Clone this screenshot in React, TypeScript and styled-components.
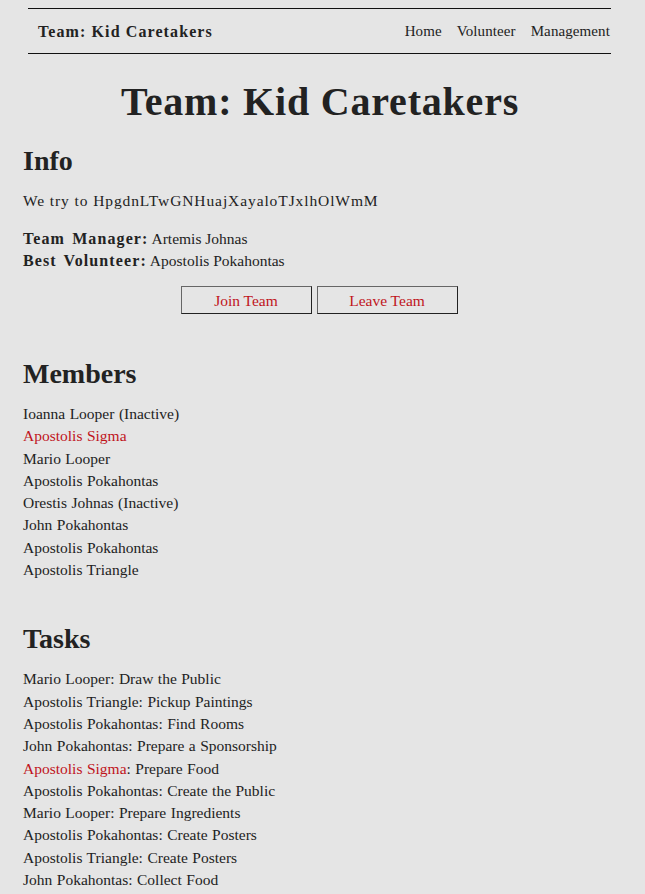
import React from 'react';
import styled, { createGlobalStyle } from 'styled-components';

const GlobalStyle = createGlobalStyle`
    html, body {
        margin: 0;
        padding: 0;
        background: #e5e5e5;
    }
    body {
        font-family: "Liberation Serif", "DejaVu Serif", serif;
        color: #222;
        font-size: 15.5px;
    }
`;

const RED = '#c0141c';

const members: { name: string; inactive?: boolean; me?: boolean }[] = [
    { name: 'Ioanna Looper', inactive: true },
    { name: 'Apostolis Sigma', me: true },
    { name: 'Mario Looper' },
    { name: 'Apostolis Pokahontas' },
    { name: 'Orestis Johnas', inactive: true },
    { name: 'John Pokahontas' },
    { name: 'Apostolis Pokahontas' },
    { name: 'Apostolis Triangle' },
];

const tasks: { who: string; what: string; me?: boolean }[] = [
    { who: 'Mario Looper', what: 'Draw the Public' },
    { who: 'Apostolis Triangle', what: 'Pickup Paintings' },
    { who: 'Apostolis Pokahontas', what: 'Find Rooms' },
    { who: 'John Pokahontas', what: 'Prepare a Sponsorship' },
    { who: 'Apostolis Sigma', what: 'Prepare Food', me: true },
    { who: 'Apostolis Pokahontas', what: 'Create the Public' },
    { who: 'Mario Looper', what: 'Prepare Ingredients' },
    { who: 'Apostolis Pokahontas', what: 'Create Posters' },
    { who: 'Apostolis Triangle', what: 'Create Posters' },
    { who: 'John Pokahontas', what: 'Collect Food' },
];

const App: React.FC = () => {
    return (
        <>
            <GlobalStyle />
            <Nav>
                <Brand>Team: Kid Caretakers</Brand>
                <NavLinks>
                    <NavLink>Home</NavLink>
                    <NavLink>Volunteer</NavLink>
                    <NavLink>Management</NavLink>
                </NavLinks>
            </Nav>
            <Main>
                <Title>Team: Kid Caretakers</Title>

                <SectionTitle>Info</SectionTitle>
                <Paragraph>We try to HpgdnLTwGNHuajXayaloTJxlhOlWmM</Paragraph>
                <Facts>
                    <div><Label>Team Manager:</Label> Artemis Johnas</div>
                    <div><Label>Best Volunteer:</Label> Apostolis Pokahontas</div>
                </Facts>
                <Buttons>
                    <Button $width={131}>Join Team</Button>
                    <Button $width={141}>Leave Team</Button>
                </Buttons>

                <SectionTitle $top={43}>Members</SectionTitle>
                <List>
                    {members.map((m, i) => (
                        <Item key={i} $me={m.me}>
                            {m.name}{m.inactive ? ' (Inactive)' : ''}
                        </Item>
                    ))}
                </List>

                <SectionTitle $top={41}>Tasks</SectionTitle>
                <List>
                    {tasks.map((t, i) => (
                        <Item key={i}>
                            <Who $me={t.me}>{t.who}</Who>: {t.what}
                        </Item>
                    ))}
                </List>
            </Main>
        </>
    );
};

export default App;

const Nav = styled.nav`
    margin: 8px 34px 0 28px;
    height: 43px;
    border-top: 1px solid #111;
    border-bottom: 1px solid #111;
    display: flex;
    align-items: center;
    justify-content: space-between;
    padding: 1px 1px 0 10px;
`;

const Brand = styled.div`
    font-weight: 700;
    font-size: 16px;
    letter-spacing: 1.1px;
`;

const NavLinks = styled.div`
    display: flex;
    gap: 15px;
    font-size: 15px;
    letter-spacing: 0.1px;
`;

const NavLink = styled.span`
    color: #222;
`;

const Main = styled.main`
    padding: 0 23px 40px;
`;

const Title = styled.h1`
    text-align: center;
    font-size: 40px;
    line-height: 48px;
    letter-spacing: 0.8px;
    font-weight: 700;
    margin: 24px 0 18px;
    padding-right: 5px;
`;

const SectionTitle = styled.h2<{ $top?: number }>`
    font-size: 28px;
    line-height: 34px;
    font-weight: 700;
    margin: ${({ $top }) => $top ?? 0}px 0 12px;
`;

const Paragraph = styled.p`
    margin: 0 0 16px;
    line-height: 22px;
    letter-spacing: 0.9px;
`;

const Facts = styled.div`
    line-height: 22px;
`;

const Label = styled.b`
    font-size: 16px;
    letter-spacing: 1.1px;
    word-spacing: 2px;
`;

const Buttons = styled.div`
    display: flex;
    justify-content: center;
    gap: 5px;
    margin-top: 14px;
    padding-right: 7px;
`;

const Button = styled.button<{ $width: number }>`
    width: ${({ $width }) => $width}px;
    height: 28px;
    background: transparent;
    border: 1px solid #666;
    border-right-color: #222;
    border-bottom-color: #222;
    color: ${RED};
    font-family: inherit;
    font-size: 15.5px;
    padding: 1px 0 0;
`;

const List = styled.div`
    line-height: 22.3px;
    word-spacing: 0.6px;
`;

const Item = styled.div<{ $me?: boolean }>`
    color: ${({ $me }) => ($me ? RED : '#222')};
`;

const Who = styled.span<{ $me?: boolean }>`
    color: ${({ $me }) => ($me ? RED : 'inherit')};
`;
